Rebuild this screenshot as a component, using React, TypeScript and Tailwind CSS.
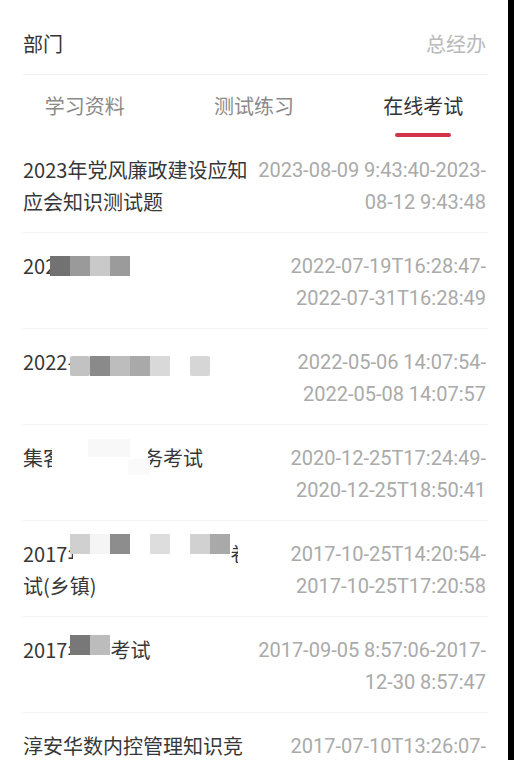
import React from "react";

type Sq = { l: number; t: number; c: string; w?: number; h?: number; r?: boolean };

type Row = {
  title: React.ReactNode[];
  dates: string[];
  squares?: Sq[];
};

const Clip = ({ ch, w, shift = 0 }: { ch: string; w: number; shift?: number }) => (
  <span className="inline-block overflow-hidden align-top h-[32px]" style={{ width: w }}>
    <span className="inline-block" style={{ marginLeft: -shift }}>
      {ch}
    </span>
  </span>
);

const Gap = ({ w }: { w: number }) => <span className="inline-block h-[32px] align-top" style={{ width: w }} />;

const rows: Row[] = [
  {
    title: ["2023年党风廉政建设应知", "应会知识测试题"],
    dates: ["2023-08-09 9:43:40-2023-", "08-12 9:43:48"],
  },
  {
    title: [<>202</>, ""],
    dates: ["2022-07-19T16:28:47-", "2022-07-31T16:28:49"],
    squares: [
      { l: 27, t: 6, c: "#727272" },
      { l: 47, t: 6, c: "#9a9a9a" },
      { l: 67, t: 6, c: "#c9c9c9" },
      { l: 87, t: 6, c: "#9b9b9b" },
    ],
  },
  {
    title: [<>2022-</>, ""],
    dates: ["2022-05-06 14:07:54-", "2022-05-08 14:07:57"],
    squares: [
      { l: 47, t: 10, c: "#c2c2c2", r: true },
      { l: 67, t: 10, c: "#8a8a8a" },
      { l: 87, t: 10, c: "#bdbdbd" },
      { l: 107, t: 10, c: "#a9a9a9" },
      { l: 127, t: 10, c: "#d9d9d9" },
      { l: 167, t: 10, c: "#d6d6d6", r: true },
    ],
  },
  {
    title: [
      <>
        集<Clip ch="客" w={9} />
        <Gap w={96} />
        <Clip ch="务" w={15} shift={5} />
        考试
      </>,
      "",
    ],
    dates: ["2020-12-25T17:24:49-", "2020-12-25T18:50:41"],
    squares: [
      { l: 65, t: -3, c: "#f8f8f8", w: 42, h: 18 },
      { l: 105, t: 17, c: "#fafafa", w: 22, h: 16 },
    ],
  },
  {
    title: [
      <>
        2017<Clip ch="年" w={6} />
        <Gap w={157} />
        <Clip ch="卷" w={8} shift={0} />
      </>,
      "试(乡镇)",
    ],
    dates: ["2017-10-25T14:20:54-", "2017-10-25T17:20:58"],
    squares: [
      { l: 47, t: -4, c: "#d0d0d0" },
      { l: 67, t: -4, c: "#f5f5f5" },
      { l: 87, t: -4, c: "#8d8d8d" },
      { l: 127, t: -4, c: "#dddddd" },
      { l: 167, t: -4, c: "#d1d1d1" },
      { l: 187, t: -4, c: "#a9a9a9" },
    ],
  },
  {
    title: [
      <>
        2017<Clip ch="年" w={6} />
        <Gap w={37} />
        考试
      </>,
      "",
    ],
    dates: ["2017-09-05 8:57:06-2017-", "12-30 8:57:47"],
    squares: [
      { l: 47, t: 1, c: "#787878" },
      { l: 67, t: 1, c: "#bcbcbc" },
    ],
  },
  {
    title: ["淳安华数内控管理知识竞", ""],
    dates: ["2017-07-10T13:26:07-", ""],
  },
];

export default function App() {
  return (
    <div className="flex w-[514px] h-[760px] overflow-hidden bg-black">
      <div className="w-[508px] h-[760px] bg-white overflow-hidden">
        {/* header */}
        <div className="px-[23px] pr-[20px]">
          <div
            className="flex justify-between items-center pt-[28px] pb-[14px] border-b border-[#f1f1f1] text-[20px] leading-[32px]"
            style={{ fontFamily: "'Noto Sans CJK SC', sans-serif" }}
          >
            <span className="text-[#353535]">部门</span>
            <span className="text-[#b9b9b9] pr-[2px]">总经办</span>
          </div>
        </div>
        {/* tabs */}
        <div
          className="flex pt-[15px] text-[20px] leading-[32px]"
          style={{ fontFamily: "'Noto Sans CJK SC', sans-serif" }}
        >
          <div className="flex-1 flex flex-col items-center">
            <span className="text-[#8a8a8a]">学习资料</span>
            <div className="mt-[11px] h-[4px]" />
          </div>
          <div className="flex-1 flex flex-col items-center">
            <span className="text-[#8a8a8a]">测试练习</span>
            <div className="mt-[11px] h-[4px]" />
          </div>
          <div className="flex-1 flex flex-col items-center">
            <span className="text-[#333333]">在线考试</span>
            <div className="mt-[11px] h-[4px] w-[56px] rounded-full bg-[#d2344b]" />
          </div>
        </div>
        {/* list */}
        <div className="px-[23px] pr-[20px]">
          {rows.map((row, i) => (
            <div
              key={i}
              className="flex justify-between pt-[17px] pb-[14px] border-b border-[#f3f3f3]"
            >
              <div
                className="w-[228px] text-[20px] leading-[32px] text-[#373737]"
                style={{ fontFamily: "'Noto Sans CJK SC', sans-serif" }}
              >
                <div className="relative h-[32px] whitespace-nowrap">
                  {row.title[0]}
                  {row.squares?.map((s, j) => (
                    <div
                      key={j}
                      className={`absolute ${s.r ? "rounded-[2px]" : ""}`}
                      style={{
                        left: s.l,
                        top: s.t,
                        width: s.w ?? 20,
                        height: s.h ?? 20,
                        background: s.c,
                      }}
                    />
                  ))}
                </div>
                <div className="h-[32px] whitespace-nowrap">{row.title[1]}</div>
              </div>
              <div
                className="flex-1 text-right text-[20px] leading-[32px] text-[#aaaaaa] pr-[2px]"
                style={{ fontFamily: "Roboto, 'Noto Sans CJK SC', sans-serif" }}
              >
                <div className="whitespace-nowrap h-[32px]">{row.dates[0]}</div>
                <div className="whitespace-nowrap h-[32px]">{row.dates[1]}</div>
              </div>
            </div>
          ))}
        </div>
      </div>
    </div>
  );
}
